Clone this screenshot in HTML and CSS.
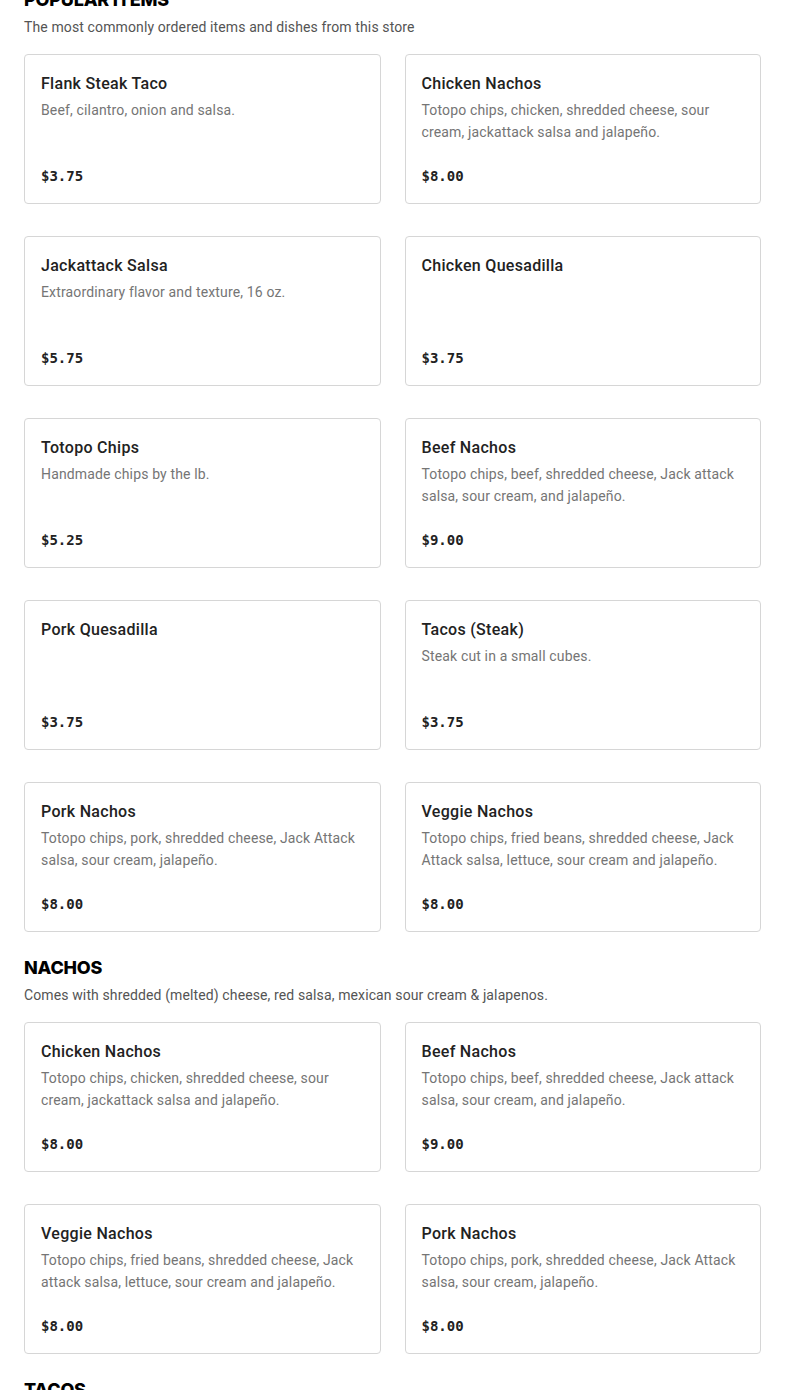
FILE: index.html
```html
<!DOCTYPE html>
<html lang="en">
<head>
<meta charset="utf-8">
<title>Menu</title>
<link rel="stylesheet" href="styles.css">
</head>
<body>
<main class="menu">
  <section class="section">
    <h2 class="section-title">POPULAR ITEMS</h2>
    <p class="section-desc">The most commonly ordered items and dishes from this store</p>
    <div class="grid">
      <div class="card"><h3 class="card-title">Flank Steak Taco</h3><p class="card-desc">Beef, cilantro, onion and salsa.</p><div class="card-price">$3.75</div></div>
      <div class="card"><h3 class="card-title">Chicken Nachos</h3><p class="card-desc">Totopo chips, chicken, shredded cheese, sour cream, jackattack salsa and jalapeño.</p><div class="card-price">$8.00</div></div>
      <div class="card"><h3 class="card-title">Jackattack Salsa</h3><p class="card-desc">Extraordinary flavor and texture, 16 oz.</p><div class="card-price">$5.75</div></div>
      <div class="card"><h3 class="card-title">Chicken Quesadilla</h3><div class="card-price">$3.75</div></div>
      <div class="card"><h3 class="card-title">Totopo Chips</h3><p class="card-desc">Handmade chips by the lb.</p><div class="card-price">$5.25</div></div>
      <div class="card"><h3 class="card-title">Beef Nachos</h3><p class="card-desc">Totopo chips, beef, shredded cheese, Jack attack salsa, sour cream, and jalapeño.</p><div class="card-price">$9.00</div></div>
      <div class="card"><h3 class="card-title">Pork Quesadilla</h3><div class="card-price">$3.75</div></div>
      <div class="card"><h3 class="card-title">Tacos (Steak)</h3><p class="card-desc">Steak cut in a small cubes.</p><div class="card-price">$3.75</div></div>
      <div class="card"><h3 class="card-title">Pork Nachos</h3><p class="card-desc">Totopo chips, pork, shredded cheese, Jack Attack salsa, sour cream, jalapeño.</p><div class="card-price">$8.00</div></div>
      <div class="card"><h3 class="card-title">Veggie Nachos</h3><p class="card-desc">Totopo chips, fried beans, shredded cheese, Jack Attack salsa, lettuce, sour cream and jalapeño.</p><div class="card-price">$8.00</div></div>
    </div>
  </section>
  <section class="section">
    <h2 class="section-title">NACHOS</h2>
    <p class="section-desc">Comes with shredded (melted) cheese, red salsa, mexican sour cream &amp; jalapenos.</p>
    <div class="grid">
      <div class="card"><h3 class="card-title">Chicken Nachos</h3><p class="card-desc">Totopo chips, chicken, shredded cheese, sour cream, jackattack salsa and jalapeño.</p><div class="card-price">$8.00</div></div>
      <div class="card"><h3 class="card-title">Beef Nachos</h3><p class="card-desc">Totopo chips, beef, shredded cheese, Jack attack salsa, sour cream, and jalapeño.</p><div class="card-price">$9.00</div></div>
      <div class="card"><h3 class="card-title">Veggie Nachos</h3><p class="card-desc">Totopo chips, fried beans, shredded cheese, Jack attack salsa, lettuce, sour cream and jalapeño.</p><div class="card-price">$8.00</div></div>
      <div class="card"><h3 class="card-title">Pork Nachos</h3><p class="card-desc">Totopo chips, pork, shredded cheese, Jack Attack salsa, sour cream, jalapeño.</p><div class="card-price">$8.00</div></div>
    </div>
  </section>
  <section class="section">
    <h2 class="section-title">TACOS</h2>
  </section>
</main>
</body>
</html>
```
FILE: styles.css
```css
* { box-sizing: border-box; }
html, body { margin: 0; padding: 0; background: #fff; }
body {
  font-family: Roboto, "Liberation Sans", sans-serif;
  color: #000;
}
.menu {
  margin-top: -12px;
  padding: 0 24px;
  display: flex;
  flex-direction: column;
  gap: 24px;
}
.section { display: flex; flex-direction: column; }
.section-title {
  margin: 0;
  font-family: Inter, Roboto, sans-serif;
  font-size: 18px;
  line-height: 24px;
  font-weight: 800;
  letter-spacing: -0.2px;
  color: #000;
}
.section-desc {
  margin: 4px 0 16px;
  font-size: 14px;
  line-height: 22px;
  letter-spacing: 0.12px;
  color: #545454;
}
.grid {
  display: grid;
  grid-template-columns: 1fr 1fr;
  column-gap: 24px;
  row-gap: 32px;
}
.card {
  height: 150px;
  border: 1px solid #d6d6d6;
  border-radius: 4px;
  padding: 16px;
  display: flex;
  flex-direction: column;
}
.card-title {
  margin: 0;
  padding-top: 1px;
  font-size: 16px;
  line-height: 24px;
  font-weight: 500;
  letter-spacing: 0.3px;
  color: #222;
}
.card-desc {
  margin: 3px 0 0;
  font-size: 14px;
  line-height: 22px;
  letter-spacing: 0.15px;
  color: #757575;
}
.card-price {
  margin-top: auto;
  margin-bottom: -1px;
  font-family: "DejaVu Sans Mono", "Liberation Mono", monospace;
  font-size: 14px;
  line-height: 24px;
  font-weight: 700;
  color: #222;
}
```
